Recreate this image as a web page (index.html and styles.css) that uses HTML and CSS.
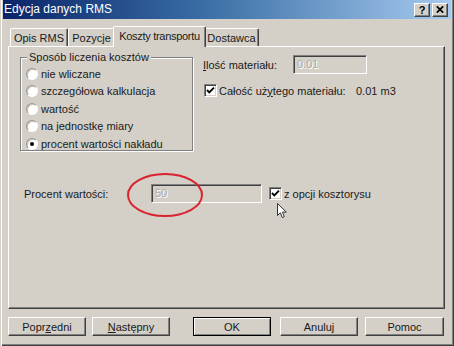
FILE: index.html
```html
<!DOCTYPE html>
<html>
<head>
<meta charset="utf-8">
<title>Edycja danych RMS</title>
<link rel="stylesheet" href="styles.css">
</head>
<body>
<div class="window">
  <div class="titlebar">
    <span class="title">Edycja danych RMS</span>
    <span class="tbtn tbtn-help">?</span>
    <span class="tbtn tbtn-close"><svg width="8" height="7" viewBox="0 0 8 7"><path d="M0.8 0.3 L7.2 6.7 M7.2 0.3 L0.8 6.7" stroke="#000" stroke-width="1.7" fill="none"/></svg></span>
  </div>

  <div class="tabs">
    <div class="tab tab-opis">Opis RMS</div>
    <div class="tab tab-poz">Pozycje</div>
    <div class="tab tab-koszty active">Koszty transportu</div>
    <div class="tab tab-dost">Dostawca</div>
  </div>

  <div class="panel">
    <div class="top">
      <div class="group">
        <span class="group-title">Sposób liczenia kosztów</span>
        <div class="radio-row"><span class="radio"></span>nie wliczane</div>
        <div class="radio-row"><span class="radio"></span>szczegółowa kalkulacja</div>
        <div class="radio-row"><span class="radio"></span>wartość</div>
        <div class="radio-row"><span class="radio"></span>na jednostkę miary</div>
        <div class="radio-row"><span class="radio checked"></span>procent wartości nakładu</div>
      </div>
      <div class="right">
        <div class="field-row">
          <span class="label-ilosc"><u>I</u>lość materiału:</span>
          <span class="input input-ilosc">0.01</span>
        </div>
        <div class="check-row">
          <span class="check"><svg width="9" height="9" viewBox="0 0 9 9"><path d="M1 4 L3.3 6.3 L8 1.6" stroke="#000" stroke-width="1.9" fill="none"/></svg></span>
          <span class="label-calosc">Całość uż<u>y</u>tego materiału:</span>
          <span class="value">0.01 m3</span>
        </div>
      </div>
    </div>

    <div class="percent-row">
      <span class="label-procent">Procent wartości:</span>
      <span class="input input-procent">50</span>
      <span class="check check-gap"><svg width="9" height="9" viewBox="0 0 9 9"><path d="M1 4 L3.3 6.3 L8 1.6" stroke="#000" stroke-width="1.9" fill="none"/></svg></span>
      <span class="check-text">z opcji kosztorysu</span>
    </div>

    <svg class="mark" width="80" height="48" viewBox="0 0 80 48"><ellipse cx="40" cy="24" rx="37" ry="21" fill="none" stroke="#d9232e" stroke-width="2"/></svg>
    <svg class="cursor" width="12" height="17" viewBox="0 0 12 17"><path d="M0.5 0.5 L0.5 12.5 L3.3 9.8 L5.3 14.6 L7.3 13.7 L5.4 9.1 L9.3 9.1 Z" fill="#fff" stroke="#333" stroke-width="1" stroke-linejoin="miter"/></svg>
  </div>

  <div class="buttons">
    <span class="btn">Popr<u>z</u>edni</span>
    <span class="btn"><u>N</u>astępny</span>
    <span class="btn btn-default btn-ok">OK</span>
    <span class="btn btn-cancel">Anuluj</span>
    <span class="btn btn-help">Pomoc</span>
  </div>
</div>
</body>
</html>
```

FILE: styles.css
```css
* { box-sizing: border-box; }
html, body { margin: 0; padding: 0; }
body {
  width: 454px;
  height: 346px;
  overflow: hidden;
  background: #d4d0c8;
  font-family: "Liberation Sans", Arial, sans-serif;
  font-size: 11px;
  color: #1a1a1a;
}
u { text-decoration: underline; text-underline-offset: 1px; }

.window {
  width: 454px;
  height: 346px;
  padding: 0 3px;
  display: flex;
  flex-direction: column;
  box-shadow: inset 1px 0 0 #d4d0c8, inset 2px 0 0 #fff, inset -1px -1px 0 #404040, inset -2px -2px 0 #808080;
}

/* title bar */
.titlebar {
  height: 19px;
  flex: none;
  display: flex;
  align-items: center;
  padding: 0 3px 0 1px;
  background: linear-gradient(to right, #0a246a 0%, #3a6ea5 45%, #a6caf0 100%);
}
.title {
  color: #fff;
  font-size: 12px;
  line-height: 19px;
  white-space: nowrap;
}
.tbtn {
  width: 16px;
  height: 14px;
  flex: none;
  display: flex;
  align-items: center;
  justify-content: center;
  background: #d4d0c8;
  border: 1px solid;
  border-color: #fff #404040 #404040 #fff;
  box-shadow: inset -1px -1px 0 #808080;
  font-weight: bold;
  font-size: 11px;
  line-height: 12px;
  color: #000;
}
.tbtn-help { margin-left: auto; }
.tbtn-close { margin-left: 2px; }

/* tabs */
.tabs {
  flex: none;
  display: flex;
  align-items: flex-end;
  height: 20px;
  margin-top: 7px;
  padding-left: 7px;
}
.tab {
  height: 18px;
  display: flex;
  align-items: center;
  justify-content: center;
  white-space: nowrap;
  border-top: 1px solid #fff;
  border-left: 1px solid #fff;
  border-right: 1px solid #404040;
  box-shadow: inset -1px 0 0 #808080;
  border-radius: 2px 2px 0 0;
}
.tab-opis { width: 58px; }
.tab-poz { width: 47px; }
.tab-koszty { width: 89px; }
.tab-dost { width: 55px; }
.tab.active {
  height: 21px;
  margin: 0 -2px -1px;
  width: 93px;
  position: relative;
  z-index: 1;
  background: #d4d0c8;
  padding-bottom: 2px;
  letter-spacing: -0.3px;
}

/* panel */
.panel {
  flex: none;
  position: relative;
  height: 263px;
  margin: 0 6px 0 5px;
  border: 1px solid;
  border-color: #fff #404040 #404040 #fff;
  box-shadow: inset -1px -1px 0 #808080;
}
.top {
  display: flex;
  align-items: flex-start;
  padding-left: 11px;
}
.group {
  position: relative;
  width: 173px;
  height: 94px;
  margin-top: 10px;
  padding: 7px 0 0 5px;
  border: 1px solid #808080;
  box-shadow: 1px 1px 0 #fff, inset 1px 1px 0 #fff;
}
.group-title {
  position: absolute;
  top: -7px;
  left: 6px;
  padding: 0 2px;
  line-height: 13px;
  background: #d4d0c8;
  white-space: nowrap;
}
.radio-row {
  height: 17.5px;
  display: flex;
  align-items: center;
  white-space: nowrap;
}
.radio {
  width: 12px;
  height: 12px;
  flex: none;
  margin-right: 3px;
  border-radius: 50%;
  border: 1px solid;
  border-color: #9a968e #fff #fff #9a968e;
  background: #fff;
  box-shadow: inset 1px 1px 0 #c8c4bc;
  position: relative;
}
.radio.checked::after {
  content: "";
  position: absolute;
  left: 3px;
  top: 3px;
  width: 4px;
  height: 4px;
  border-radius: 50%;
  background: #000;
}

.right {
  margin-left: 10px;
  margin-top: 8px;
}
.field-row {
  display: flex;
  align-items: center;
  height: 19px;
}
.label-ilosc { width: 90px; white-space: nowrap; }
.input {
  display: block;
  flex: none;
  height: 19px;
  padding: 0 3px;
  line-height: 17px;
  border: 1px solid;
  border-color: #808080 #fff #fff #808080;
  box-shadow: inset 1px 1px 0 #404040, inset -1px -1px 0 #d4d0c8;
  background: #d4d0c8;
  color: #b0aca4;
  text-shadow: 1px 1px 0 #fff;
}
.input-ilosc { width: 74px; }
.input-procent { width: 111px; }

.check-row {
  display: flex;
  align-items: center;
  height: 13px;
  margin-top: 10px;
  padding-left: 1px;
  white-space: nowrap;
}
.check {
  width: 13px;
  height: 13px;
  flex: none;
  display: flex;
  align-items: center;
  justify-content: center;
  background: #fff;
  border: 1px solid;
  border-color: #808080 #fff #fff #808080;
  box-shadow: inset 1px 1px 0 #404040, inset -1px -1px 0 #d4d0c8;
}
.label-calosc { width: 137px; margin-left: 2px; }
.value { white-space: nowrap; }

.percent-row {
  display: flex;
  align-items: center;
  height: 19px;
  margin-top: 33px;
  padding-left: 15px;
  white-space: nowrap;
}
.label-procent { width: 127px; }
.check-gap { margin-left: 7px; }
.check-text { margin-left: 2px; }

.mark {
  position: absolute;
  left: 116px;
  top: 124px;
}
.cursor {
  position: absolute;
  left: 268px;
  top: 156px;
}

/* bottom buttons */
.buttons {
  flex: none;
  display: flex;
  height: 19px;
  margin-top: 8px;
  padding-left: 5px;
  gap: 6px;
}
.btn {
  width: 78px;
  height: 19px;
  display: flex;
  align-items: center;
  justify-content: center;
  background: #d4d0c8;
  border: 1px solid;
  border-color: #fff #404040 #404040 #fff;
  box-shadow: inset -1px -1px 0 #808080;
  white-space: nowrap;
}
.btn-default {
  border-color: #000;
  box-shadow: inset 1px 1px 0 #fff, inset -1px -1px 0 #808080;
}
.btn-ok { margin-left: 17px; }
.btn-cancel { margin-left: 3px; }
.btn-help { margin-left: 1px; width: 79px; }
```
